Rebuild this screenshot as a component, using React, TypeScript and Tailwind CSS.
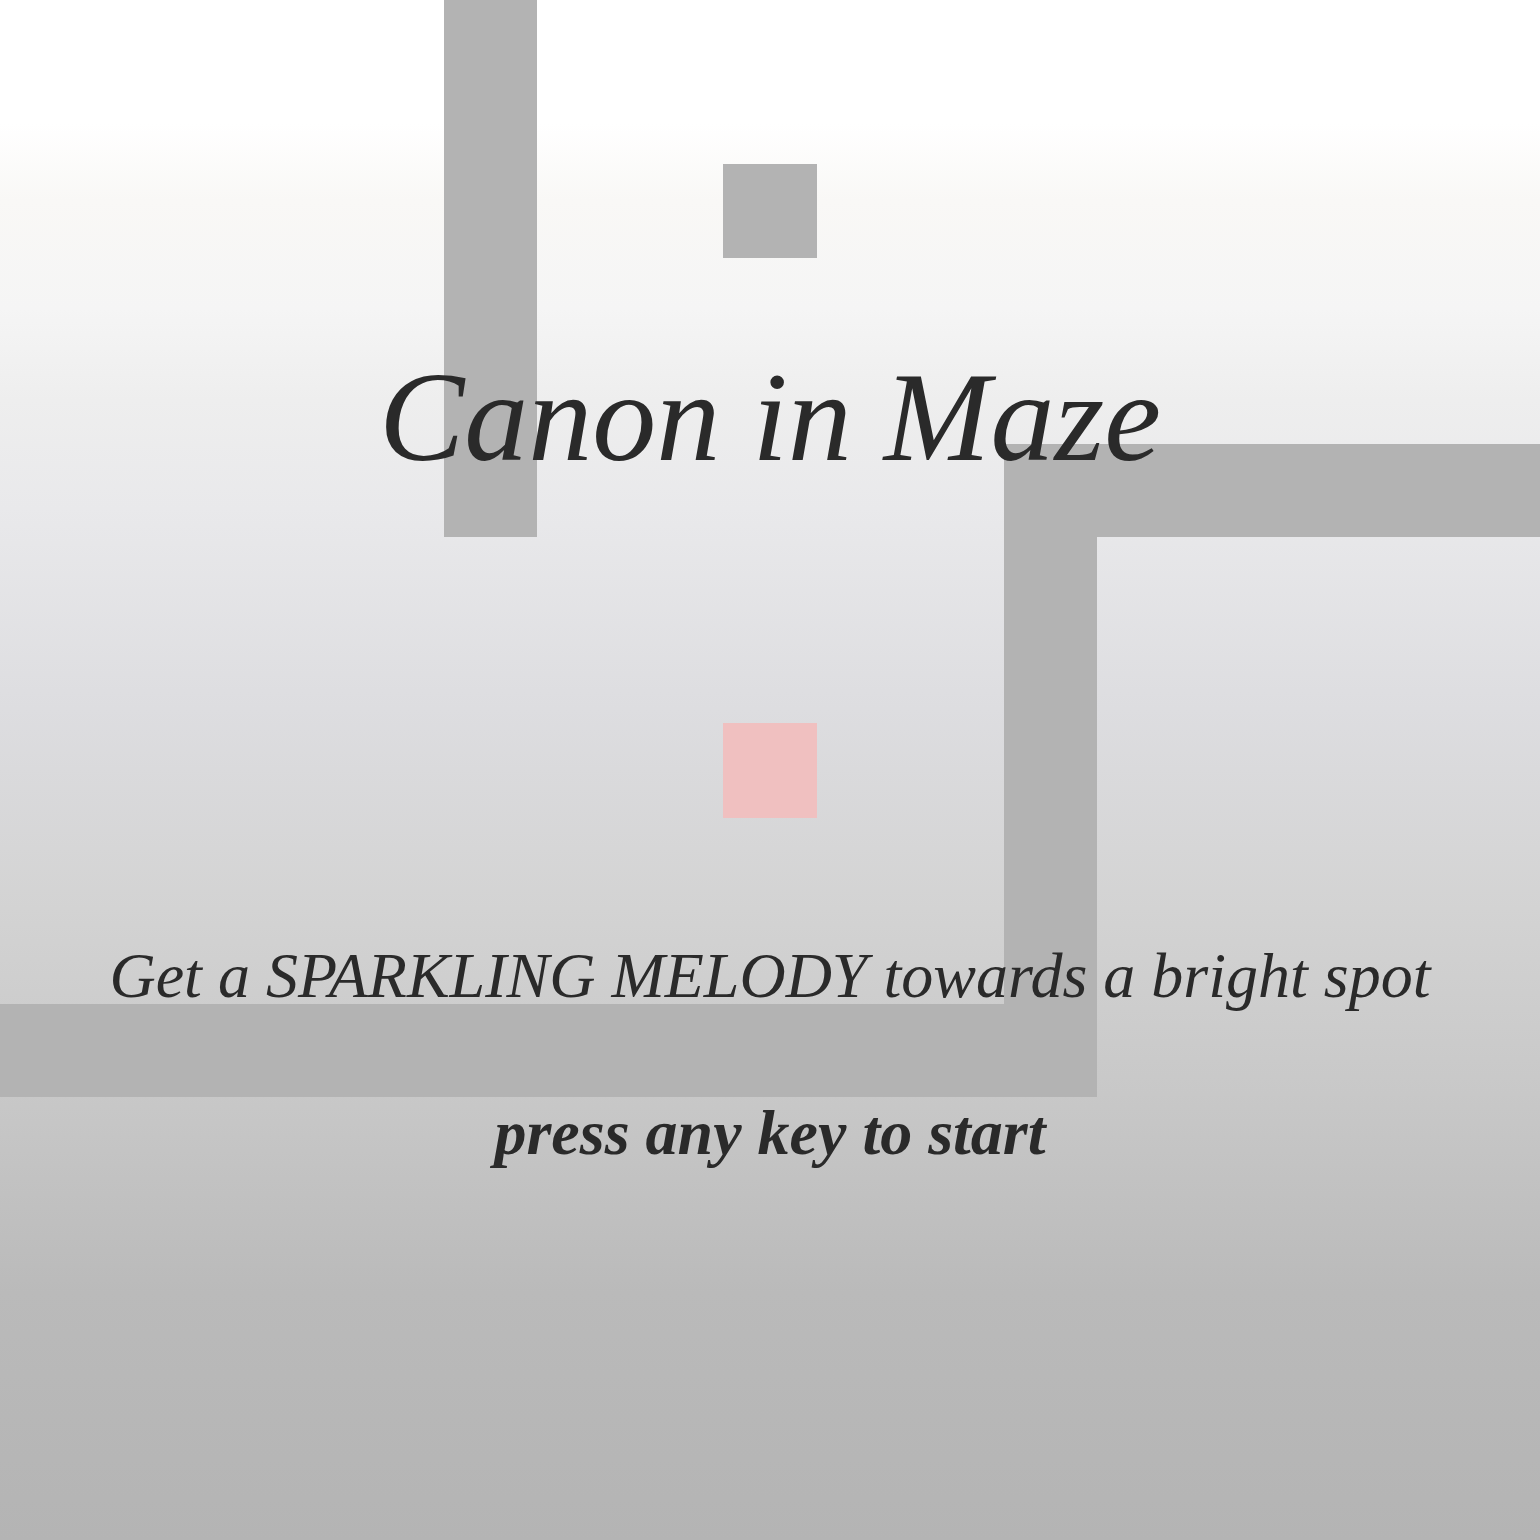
import React from "react";

// maze pieces in pixels on the 1540 canvas (cell ~93px)
const walls = [
  { x: 444, y: 0, w: 93, h: 537 },
  { x: 1004, y: 444, w: 536, h: 93 },
  { x: 1004, y: 444, w: 93, h: 653 },
  { x: 0, y: 1004, w: 1097, h: 93 },
  { x: 723, y: 164, w: 94, h: 94 },
];

const App = () => {
  return (
    <div
      className="relative w-[1540px] h-[1540px] overflow-hidden bg-[linear-gradient(to_bottom,#ffffff_0%,#ffffff_8%,#f9f8f6_13%,#f5f5f5_20%,#eeeeee_26%,#e9e9eb_33%,#dddde0_46%,#d3d3d3_59%,#c8c8c8_71%,#bababa_84%,#b4b4b4_100%)] text-[#2a2a2a]"
      style={{ fontFamily: '"Liberation Serif", "Times New Roman", serif' }}
    >
      {/* maze canvas */}
      {walls.map((w, i) => (
        <div
          key={i}
          className="absolute bg-[#b3b3b3]"
          style={{ left: w.x, top: w.y, width: w.w, height: w.h }}
        />
      ))}
      {/* player */}
      <div className="absolute left-[723px] top-[723px] w-[94px] h-[95px] bg-[#f0c0c0]" />

      {/* title screen text */}
      <div className="relative flex flex-col items-center italic">
        <h1 className="mt-[347px] text-[128px] leading-[140px]">Canon in Maze</h1>
        <p className="mt-[449px] text-[64px] leading-[80px]">Get a SPARKLING MELODY towards a bright spot</p>
        <p className="mt-[77px] text-[64px] leading-[80px] font-bold">press any key to start</p>
      </div>
    </div>
  );
};

export default App;
